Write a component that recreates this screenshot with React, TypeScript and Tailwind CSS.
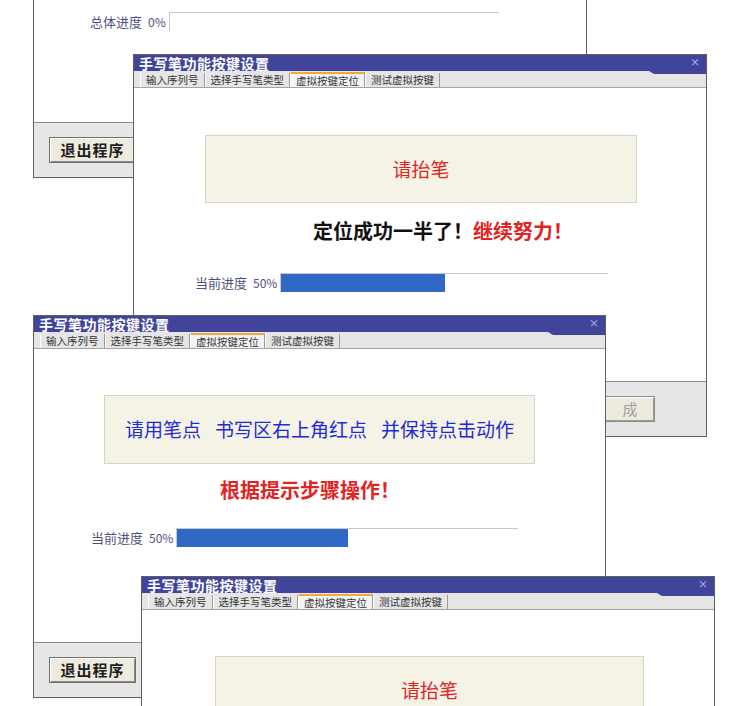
import React from "react";

const tabs = ["输入序列号", "选择手写笔类型", "虚拟按键定位", "测试虚拟按键"];

const TitleBar = () => (
  <div className="relative h-[16px] shrink-0 bg-[#40459b]">
    <span className="block pl-[5px] text-[14px] leading-[16px] font-bold text-white tracking-[0.5px]">
      手写笔功能按键设置
    </span>
    <span className="absolute right-[6px] top-[1px] text-[10px] leading-[12px] text-[#c9cbe6]">×</span>
    <div className="absolute right-0 top-full h-[3px] w-[57px] bg-[#40459b] [clip-path:polygon(0_0,100%_0,100%_100%,5px_100%)]" />
  </div>
);

const TabRow = () => (
  <div className="flex h-[17px] shrink-0 items-end border-b border-[#a3a3a3] bg-[#e5e5e5] pl-[6px]">
    {tabs.map((t, i) => (
      <div
        key={t}
        className={
          i === 2
            ? "h-[15px] border-t-2 border-l border-r border-t-[#f3a83c] border-l-white border-r-[#9a9a9a] bg-[#f3f3f3] px-[5px] text-[10.5px] leading-[13px] text-[#333]"
            : "h-[14px] border-l border-r border-l-white border-r-[#9a9a9a] px-[5px] text-[10.5px] leading-[14px] text-[#333]"
        }
      >
        {t}
      </div>
    ))}
  </div>
);

const Footer = ({ showExit }: { showExit: boolean }) => (
  <div className="flex h-[55px] shrink-0 items-center justify-between border-t border-[#8d8d8d] bg-[#e6e6e6] pl-[15px] pr-[51px]">
    {showExit ? (
      <div className="flex h-[26px] w-[87px] items-center justify-center border border-[#6f6f6f] bg-[#eeebde] text-[15px] font-bold tracking-[1px] text-[#1c1c1c] shadow-[inset_1px_1px_0_#fff,inset_-1px_-1px_0_#8a8a8a]">
        退出程序
      </div>
    ) : (
      <div />
    )}
    <div className="flex h-[26px] w-[87px] items-center justify-center gap-[22px] border border-[#8c8c8c] bg-[#eeebde] text-[15px] text-[#a0a0a0] shadow-[inset_1px_1px_0_#fff,inset_-1px_-1px_0_#9b9b9b]">
      <span>完</span>
      <span>成</span>
    </div>
  </div>
);

const Progress = ({ title, value, offset, width }: { title: string; value: number; offset: string; width: string }) => (
  <div className={`flex h-[19px] items-center ${offset}`}>
    <span className="text-[13px] text-[#50507e]">{title}</span>
    <span className="ml-[6px] mr-[3px] text-[12px] text-[#50507e]">{value}%</span>
    <div className={`h-[19px] border-t border-l border-[#c9c9c9] ${width}`}>
      <div className="h-full bg-[#2f69c5]" style={{ width: `${value}%` }} />
    </div>
  </div>
);

const Window = ({
  pos,
  bare,
  showExit = true,
  children,
}: {
  pos: string;
  bare?: boolean;
  showExit?: boolean;
  children: React.ReactNode;
}) => (
  <div className={`absolute flex h-[383px] flex-col border border-[#5f5f5f] bg-white ${pos}`}>
    {bare ? (
      <div className="h-[33px] shrink-0" />
    ) : (
      <>
        <TitleBar />
        <TabRow />
      </>
    )}
    <div className="flex flex-1 flex-col">{children}</div>
    <Footer showExit={showExit} />
  </div>
);

export default function App() {
  return (
    <div className="relative h-[706px] w-[751px] overflow-hidden bg-white font-['Noto_Sans_CJK_SC','Liberation_Sans',sans-serif]">
      {/* top window, only its lower part shows */}
      <Window pos="left-[33px] top-[-205px] w-[554px]" bare>
        <div className="h-[183px]" />
        <Progress title="总体进度" value={0} offset="ml-[56px]" width="w-[330px]" />
      </Window>

      <Window pos="left-[133px] top-[54px] w-[574px]" showExit={false}>
        <div className="ml-[71px] mt-[47px] flex h-[68px] w-[432px] items-center justify-center border border-[#d6d4c4] bg-[#f5f3e6]">
          <span className="text-[19px] text-[#e2231f]">请抬笔</span>
        </div>
        <div className="ml-[179px] mt-[16px] h-[24px] text-[20px] font-semibold leading-[24px]">
          <span className="text-[#111]">定位成功一半了！</span>
          <span className="text-[#e2231f]">继续努力！</span>
        </div>
        <Progress title="当前进度" value={50} offset="ml-[61px] mt-[30px]" width="w-[328px]" />
      </Window>

      <Window pos="left-[33px] top-[315px] w-[573px]">
        <div className="ml-[70px] mt-[46px] flex h-[69px] w-[431px] items-center justify-center border border-[#d6d4c4] bg-[#f5f3e6]">
          <span className="text-[19px] text-[#1f2bd3]">请用笔点</span>
          <span className="ml-[14px] text-[19px] text-[#1f2bd3]">书写区右上角红点</span>
          <span className="ml-[14px] text-[19px] text-[#1f2bd3]">并保持点击动作</span>
        </div>
        <div className="ml-[186px] mt-[14px] h-[24px] text-[20px] font-semibold leading-[24px] text-[#e2231f]">
          根据提示步骤操作！
        </div>
        <Progress title="当前进度" value={50} offset="ml-[57px] mt-[26px]" width="w-[342px]" />
      </Window>

      <Window pos="left-[141px] top-[576px] w-[574px]">
        <div className="ml-[73px] mt-[46px] flex h-[68px] w-[429px] items-center justify-center border border-[#d6d4c4] bg-[#f5f3e6]">
          <span className="text-[19px] text-[#e2231f]">请抬笔</span>
        </div>
      </Window>
    </div>
  );
}
